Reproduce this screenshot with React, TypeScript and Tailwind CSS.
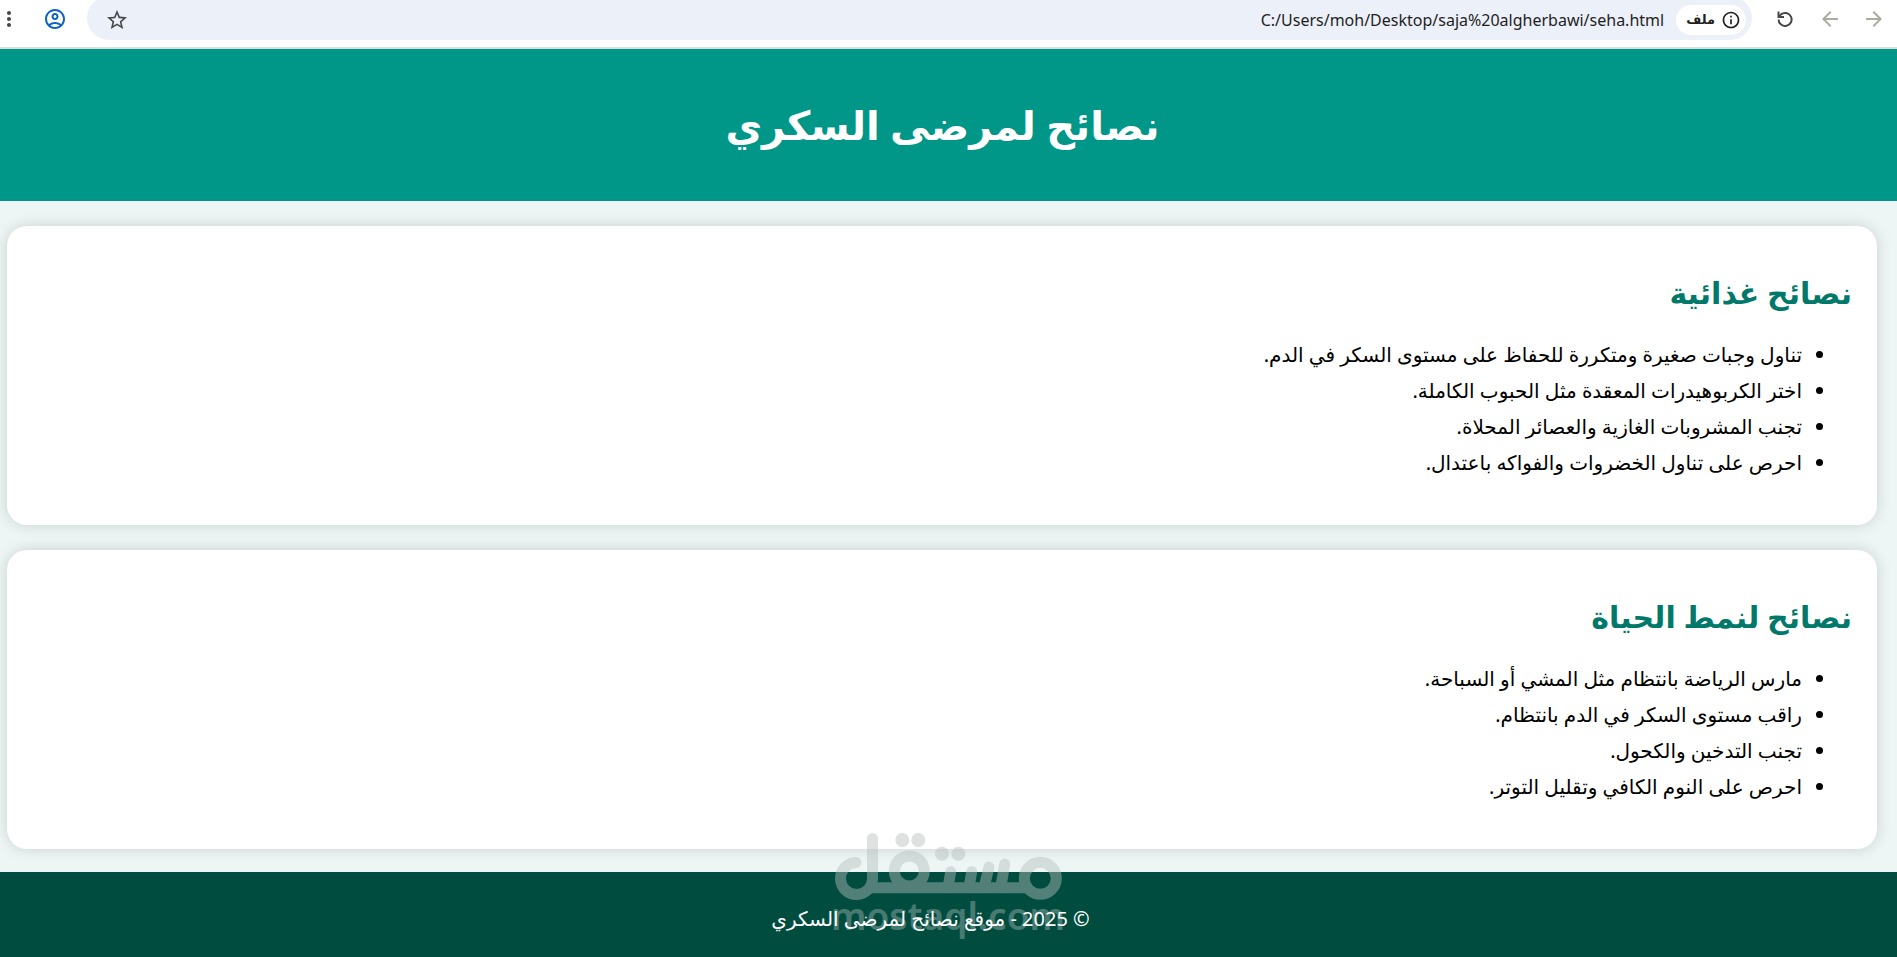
import { MdArrowBack, MdArrowForward, MdInfoOutline, MdMoreVert, MdOutlineAccountCircle, MdStarBorder } from "react-icons/md";

type TipSection = { title: string; tips: string[] };

const SECTIONS: TipSection[] = [
  {
    title: "نصائح غذائية",
    tips: [
      "تناول وجبات صغيرة ومتكررة للحفاظ على مستوى السكر في الدم.",
      "اختر الكربوهيدرات المعقدة مثل الحبوب الكاملة.",
      "تجنب المشروبات الغازية والعصائر المحلاة.",
      "احرص على تناول الخضروات والفواكه باعتدال.",
    ],
  },
  {
    title: "نصائح لنمط الحياة",
    tips: [
      "مارس الرياضة بانتظام مثل المشي أو السباحة.",
      "راقب مستوى السكر في الدم بانتظام.",
      "تجنب التدخين والكحول.",
      "احرص على النوم الكافي وتقليل التوتر.",
    ],
  },
];

function ReloadIcon() {
  return (
    <svg viewBox="0 0 20 20" className="size-5" fill="none" stroke="currentColor" strokeWidth="2">
      <path d="M3.6 10.5A6.5 6.5 0 1 0 6 5.4L4 7.4" />
      <path d="M3.5 2.5V8H9" />
    </svg>
  );
}

function BrowserBar() {
  return (
    <div dir="ltr" className="flex h-[49px] items-start overflow-hidden border-b-2 border-[#dcdfde] bg-white text-[#474747]">
      <div className="flex h-[38px] items-center">
        <button type="button" aria-label="القائمة" className="-ml-[3px] w-6">
          <MdMoreVert className="size-6" />
        </button>
        <button type="button" aria-label="الحساب" className="ml-[22px] mr-5 text-[#0b62c4]">
          <MdOutlineAccountCircle className="size-6" />
        </button>
      </div>
      <div className="-mt-1 flex h-11 flex-1 items-center rounded-full bg-[#ecf0f9] pl-[18px] pr-[6px] pt-1">
        <button type="button" aria-label="إضافة إشارة">
          <MdStarBorder className="size-6" />
        </button>
        <input
          type="text"
          readOnly
          aria-label="العنوان"
          value="C:/Users/moh/Desktop/saja%20algherbawi/seha.html"
          className="min-w-0 flex-1 bg-transparent pr-3 text-right text-[16px] text-[#1f1f1f] outline-none"
        />
        <button type="button" className="flex h-[30px] items-center gap-[6px] rounded-full bg-white pl-[10px] pr-[5px] text-[13px] font-bold text-[#1f1f1f]">
          ملف
          <MdInfoOutline className="size-5" />
        </button>
      </div>
      <div className="flex h-[38px] items-center gap-5 pl-[23px] pr-[11px]">
        <button type="button" aria-label="إعادة تحميل" className="mr-[3px]"><ReloadIcon /></button>
        <button type="button" aria-label="رجوع" className="text-[#a9aca0]"><MdArrowBack className="size-6" /></button>
        <button type="button" aria-label="تقدم" className="text-[#a9aca0]"><MdArrowForward className="size-6" /></button>
      </div>
    </div>
  );
}

function TipCard({ title, tips }: TipSection) {
  return (
    <section className="rounded-[20px] bg-white px-[25px] pb-11 pt-[45px] shadow-[0_0_15px_rgba(0,0,0,0.15)]">
      <h2 className="text-[30px] font-bold leading-[44px] text-[#00796b]">{title}</h2>
      <ul className="mt-[22px] list-disc pr-[50px] text-[20px] leading-9 text-black">
        {tips.map((tip) => (
          <li key={tip}>{tip}</li>
        ))}
      </ul>
    </section>
  );
}

function Watermark() {
  return (
    <svg
      viewBox="0 0 240 124"
      aria-hidden="true"
      className="pointer-events-none absolute bottom-0 left-[834px] h-[124px] w-[240px] overflow-visible"
    >
      <g opacity="0.45" fill="none" stroke="#b5bfbc" strokeWidth="11" strokeLinecap="round">
        <path d="M22 29.5A16 16 0 1 0 38.5 45.5V5.5" />
        <path d="M38 54.7H190" />
        <circle cx="75.3" cy="38" r="15" />
        <circle cx="206.3" cy="45.3" r="16" />
        <path d="M116.7 38.7L114 54.7M137.7 38.7L135 54.7M155 34L150 54.7M170.7 31L166.7 54.7" />
        <g fill="#b5bfbc" stroke="none">
          <circle cx="68.3" cy="7" r="7" />
          <circle cx="84.3" cy="7" r="7" />
          <circle cx="108" cy="20.7" r="7" />
          <circle cx="124.3" cy="20.7" r="7" />
        </g>
      </g>
      <text x="114" y="97" textAnchor="middle" direction="ltr" fill="#b5bfbc" opacity="0.4" className="text-[37px] font-semibold">
        mostaql.com
      </text>
    </svg>
  );
}

export default function App() {
  return (
    <div
      dir="rtl"
      className="relative min-h-screen bg-[#edf6f5] font-['Segoe_UI','Noto_Sans','DejaVu_Sans',sans-serif]"
    >
      <BrowserBar />
      <header className="flex h-[152px] items-center justify-center bg-[#009688] pr-3 text-white">
        <h1 className="text-[40px] font-bold">نصائح لمرضى السكري</h1>
      </header>
      <main className="flex flex-col gap-[25px] pb-[23px] pl-[7px] pr-5 pt-[25px]">
        {SECTIONS.map((section) => (
          <TipCard key={section.title} {...section} />
        ))}
      </main>
      <footer className="flex h-[85px] items-center justify-center bg-[#004d40] pr-9 pt-2 text-[20px] text-white">
        <p className="relative z-10">© 2025 - موقع نصائح لمرضى السكري</p>
      </footer>
      <Watermark />
    </div>
  );
}
